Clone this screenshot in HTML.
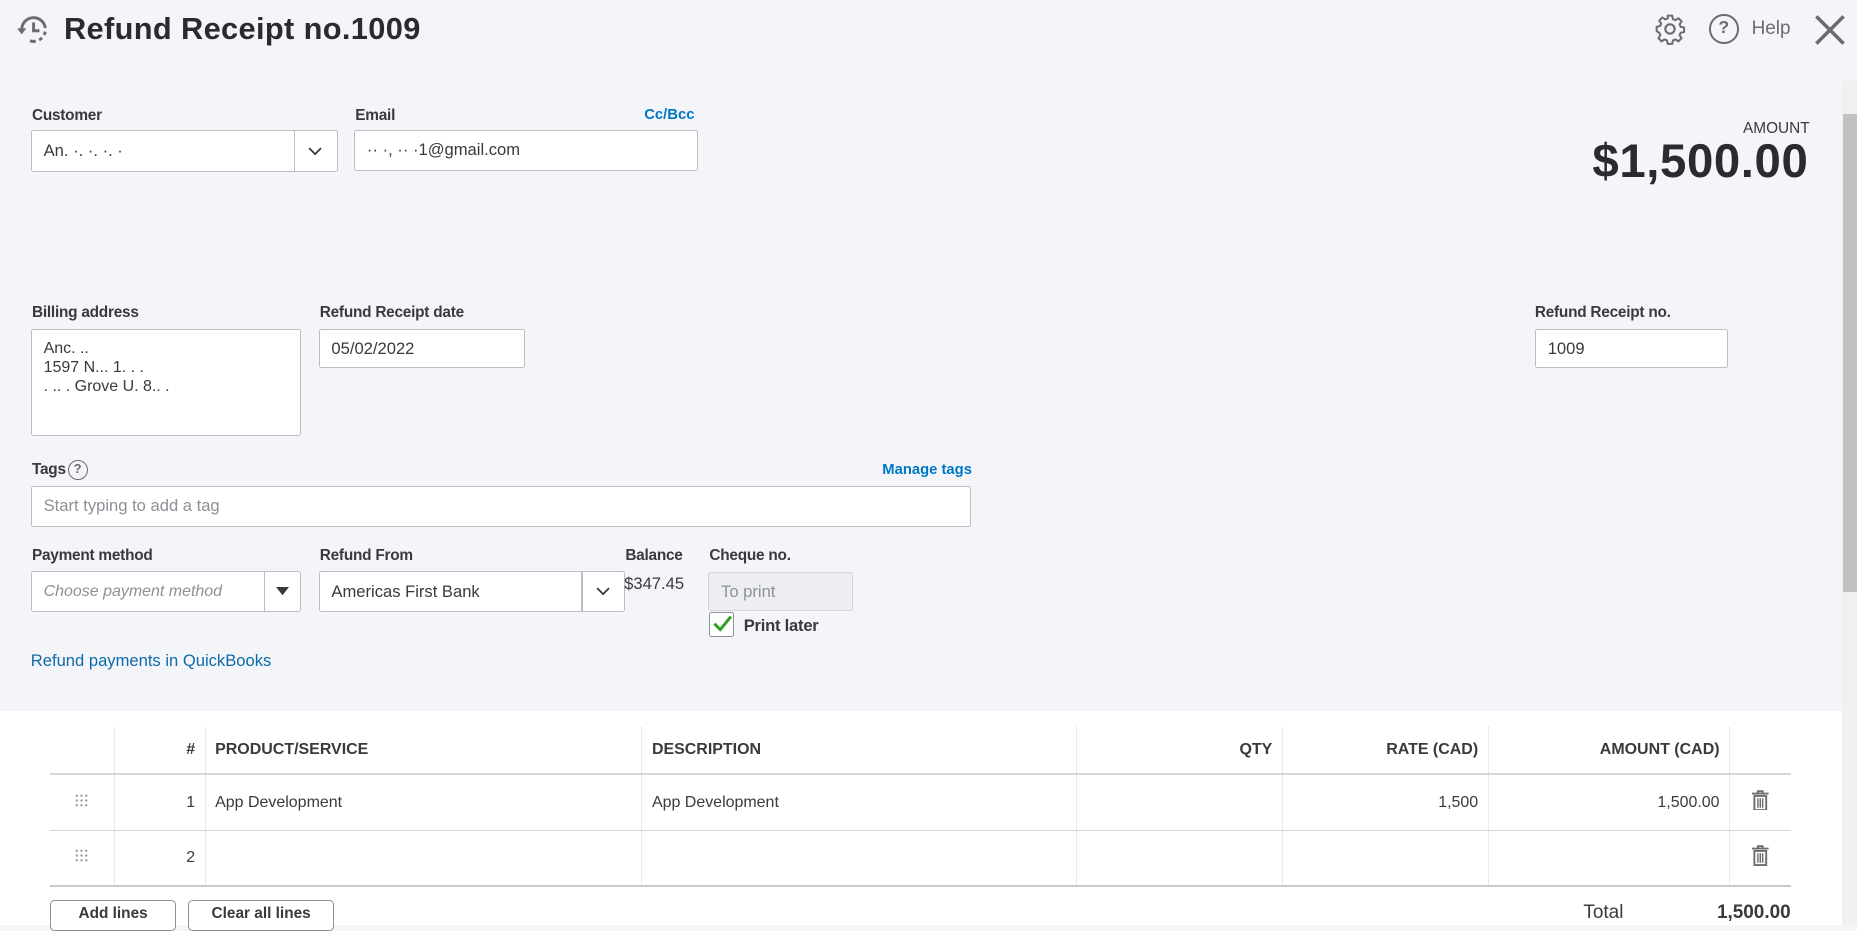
<!DOCTYPE html>
<html><head><meta charset="utf-8"><style>
html{zoom:1.18431}
body{margin:0;width:1568px;height:781px;overflow:hidden;background:#f4f5f8;font-family:"Liberation Sans",sans-serif;color:#393a3d;position:relative}
.a{position:absolute}
.lbl{font-size:13px;color:#393a3d;font-weight:bold;letter-spacing:-0.2px}
.inp{position:absolute;background:#fff;border:1px solid #babec5;border-radius:2px;box-sizing:border-box;font-size:14px;padding:0 10px;display:flex;align-items:center}
.link{color:#0077c5;font-size:12.5px;font-weight:bold}
.white{position:absolute;left:0;top:600px;width:1555px;height:181px;background:#fff}
th,td{font-size:13.5px}
.tb{position:absolute;left:42px;top:614px;border-collapse:collapse;width:1470px}
.tb th{height:39px;border-bottom:2px solid #d4d7dc;text-align:left;padding:0 8px;font-weight:bold;color:#393a3d}
.tb td{height:46px;border-bottom:1px solid #d4d7dc;padding:0 8px;color:#393a3d}
.tb th+th,.tb td+td{border-left:1px dotted #d4d7dc}
.tb tr:last-child td{border-bottom:2px solid #c7cacf}
.r{text-align:right!important}
.c{text-align:center}
.btn{position:absolute;top:760px;height:26px;border:1px solid #8d9096;border-radius:4px;background:#fff;font-size:13px;font-weight:bold;text-align:center;line-height:22px;box-sizing:border-box}
</style></head><body>
<svg class="a" style="left:14px;top:11px" width="30" height="28" viewBox="0 0 30 28"><path d="M4 14 A10 10 0 1 1 11 23.5" fill="none" stroke="#6b6c72" stroke-width="2.5" stroke-dasharray="30 3 3 3 3 3"/><path d="M14 8 v7 h5" fill="none" stroke="#6b6c72" stroke-width="2.5"/><path d="M0 13 l4 5 l4-5z" fill="#6b6c72"/></svg>
<div class="a" style="left:54px;top:9px;font-size:26px;font-weight:bold;color:#2b2b2e;letter-spacing:0.3px">Refund Receipt no.1009</div>
<svg class="a" style="left:1397px;top:11px" width="27" height="27" viewBox="0 0 24 24"><path d="M12 8.5a3.5 3.5 0 1 0 0 7a3.5 3.5 0 1 0 0-7z" fill="none" stroke="#6b6c72" stroke-width="1.6"/><path d="M10.3 2h3.4l.5 2.6 1.9.8 2.2-1.5 2.4 2.4-1.5 2.2.8 1.9 2.6.5v3.4l-2.6.5-.8 1.9 1.5 2.2-2.4 2.4-2.2-1.5-1.9.8-.5 2.6h-3.4l-.5-2.6-1.9-.8-2.2 1.5-2.4-2.4 1.5-2.2-.8-1.9L2 13.7v-3.4l2.6-.5.8-1.9-1.5-2.2 2.4-2.4 2.2 1.5 1.9-.8z" fill="none" stroke="#6b6c72" stroke-width="1.5" stroke-linejoin="round"/></svg>
<div class="a" style="left:1443px;top:12px;width:25px;height:25px;border:2.5px solid #6b6c72;border-radius:50%;box-sizing:border-box;text-align:center;font-weight:bold;font-size:15px;line-height:20px;color:#6b6c72">?</div>
<div class="a" style="left:1479px;top:15px;font-size:16px;color:#6b6c72">Help</div>
<svg class="a" style="left:1532px;top:12px" width="27" height="27"><path d="M2 2L25 25M25 2L2 25" stroke="#6b6c72" stroke-width="3"/></svg>
<div class="a" style="left:1555px;top:68px;width:13px;height:713px;background:#f0f0f0"></div>
<div class="a" style="left:1556px;top:96px;width:12px;height:404px;background:#c1c1c1"></div>
<div class="a lbl" style="left:27px;top:90px">Customer</div>
<div class="inp" style="left:26px;top:110px;width:259px;height:35px">An. ·. ·. ·. ·</div>
<div class="a" style="left:248px;top:111px;width:1px;height:33px;background:#babec5"></div>
<svg class="a" style="left:260px;top:124px" width="12" height="8"><path d="M1 1l5 5 5-5" fill="none" stroke="#393a3d" stroke-width="1.5"/></svg>
<div class="a lbl" style="left:300px;top:90px">Email</div>
<div class="a link" style="left:544px;top:90px">Cc/Bcc</div>
<div class="inp" style="left:299px;top:110px;width:290px;height:34px">·· ·, ·· ·1@gmail.com</div>
<div class="a" style="right:40px;top:101px;font-size:13px;color:#393a3d">AMOUNT</div>
<div class="a" style="right:41px;top:113px;font-size:40px;font-weight:bold;color:#2b2b2e;letter-spacing:0.5px">$1,500.00</div>
<div class="a lbl" style="left:27px;top:257px">Billing address</div>
<div class="inp" style="left:26px;top:278px;width:228px;height:90px;align-items:flex-start;padding-top:8px;line-height:16px;font-size:13.5px">Anc. ..<br>1597 N... 1. . .<br>. .. . Grove U. 8.. .</div>
<div class="a lbl" style="left:270px;top:257px">Refund Receipt date</div>
<div class="inp" style="left:269px;top:278px;width:174px;height:33px">05/02/2022</div>
<div class="a lbl" style="left:1296px;top:257px">Refund Receipt no.</div>
<div class="inp" style="left:1296px;top:278px;width:163px;height:33px">1009</div>
<div class="a lbl" style="left:27px;top:389px">Tags</div>
<div class="a" style="left:57px;top:388px;width:17px;height:17px;border:1.5px solid #6b6c72;border-radius:50%;box-sizing:border-box;text-align:center;font-size:11px;font-weight:bold;line-height:14px;color:#6b6c72">?</div>
<div class="a link" style="left:745px;top:390px">Manage tags</div>
<div class="inp" style="left:26px;top:410px;width:794px;height:35px;color:#8d9096">Start typing to add a tag</div>
<div class="a lbl" style="left:27px;top:462px">Payment method</div>
<div class="inp" style="left:26px;top:482px;width:228px;height:35px;color:#8d9096;font-style:italic;font-size:13.5px">Choose payment method</div>
<div class="a" style="left:223px;top:483px;width:1px;height:33px;background:#babec5"></div>
<svg class="a" style="left:233px;top:496px" width="11" height="7"><path d="M0 0h11L5.5 7z" fill="#393a3d"/></svg>
<div class="a lbl" style="left:270px;top:462px">Refund From</div>
<div class="inp" style="left:269px;top:482px;width:259px;height:35px">Americas First Bank</div>
<div class="a" style="left:491px;top:483px;width:1px;height:33px;background:#babec5"></div>
<svg class="a" style="left:503px;top:496px" width="12" height="8"><path d="M1 1l5 5 5-5" fill="none" stroke="#393a3d" stroke-width="1.5"/></svg>
<div class="a lbl" style="left:528px;top:462px">Balance</div>
<div class="a" style="left:527px;top:485px;font-size:14px">$347.45</div>
<div class="a lbl" style="left:599px;top:462px">Cheque no.</div>
<div class="inp" style="left:598px;top:483px;width:122px;height:33px;background:#eceef1;color:#8d9096;border-color:#d4d7dc">To print</div>
<div class="a" style="left:599px;top:517px;width:21px;height:21px;border:1px solid #8d9096;border-radius:2px;background:#fff;box-sizing:border-box"></div>
<svg class="a" style="left:601px;top:518px" width="18" height="18"><path d="M2 9l5 5 9-11" fill="none" stroke="#2ca01c" stroke-width="2.5"/></svg>
<div class="a lbl" style="left:628px;top:520px;font-size:14px">Print later</div>
<div class="a" style="left:26px;top:550px;font-size:14px;color:#0d6aaa">Refund payments in QuickBooks</div>
<div class="white"></div>
<table class="tb">
<tr><th style="width:38px"></th><th class="r" style="width:60px">#</th><th style="width:352px">PRODUCT/SERVICE</th><th style="width:350px">DESCRIPTION</th><th class="r" style="width:157px">QTY</th><th class="r" style="width:157px">RATE (CAD)</th><th class="r" style="width:187px">AMOUNT (CAD)</th><th></th></tr>
<tr><td class="c"><svg width="11" height="11"><g fill="#999"><circle cx="1.5" cy="1.5" r="1"/><circle cx="5.5" cy="1.5" r="1"/><circle cx="9.5" cy="1.5" r="1"/><circle cx="1.5" cy="5.5" r="1"/><circle cx="5.5" cy="5.5" r="1"/><circle cx="9.5" cy="5.5" r="1"/><circle cx="1.5" cy="9.5" r="1"/><circle cx="5.5" cy="9.5" r="1"/><circle cx="9.5" cy="9.5" r="1"/></g></svg></td><td class="r">1</td><td>App Development</td><td>App Development</td><td></td><td class="r">1,500</td><td class="r">1,500.00</td><td class="c"><svg width="14" height="17" viewBox="0 0 14 17"><path d="M0 3h14M5 3V1h4v2M2 5h10v12H2z" fill="none" stroke="#6b6c72" stroke-width="1.6"/><path d="M5 7v8M7 7v8M9 7v8" stroke="#6b6c72" stroke-width="1.2"/></svg></td></tr>
<tr><td class="c"><svg width="11" height="11"><g fill="#999"><circle cx="1.5" cy="1.5" r="1"/><circle cx="5.5" cy="1.5" r="1"/><circle cx="9.5" cy="1.5" r="1"/><circle cx="1.5" cy="5.5" r="1"/><circle cx="5.5" cy="5.5" r="1"/><circle cx="9.5" cy="5.5" r="1"/><circle cx="1.5" cy="9.5" r="1"/><circle cx="5.5" cy="9.5" r="1"/><circle cx="9.5" cy="9.5" r="1"/></g></svg></td><td class="r">2</td><td></td><td></td><td></td><td></td><td></td><td class="c"><svg width="14" height="17" viewBox="0 0 14 17"><path d="M0 3h14M5 3V1h4v2M2 5h10v12H2z" fill="none" stroke="#6b6c72" stroke-width="1.6"/><path d="M5 7v8M7 7v8M9 7v8" stroke="#6b6c72" stroke-width="1.2"/></svg></td></tr>
</table>
<div class="btn" style="left:42px;width:107px">Add lines</div>
<div class="btn" style="left:159px;width:123px">Clear all lines</div>
<div class="a" style="left:1337px;top:762px;font-size:16px">Total</div>
<div class="a" style="right:56px;top:762px;font-size:16px;font-weight:bold">1,500.00</div>
</body></html>
